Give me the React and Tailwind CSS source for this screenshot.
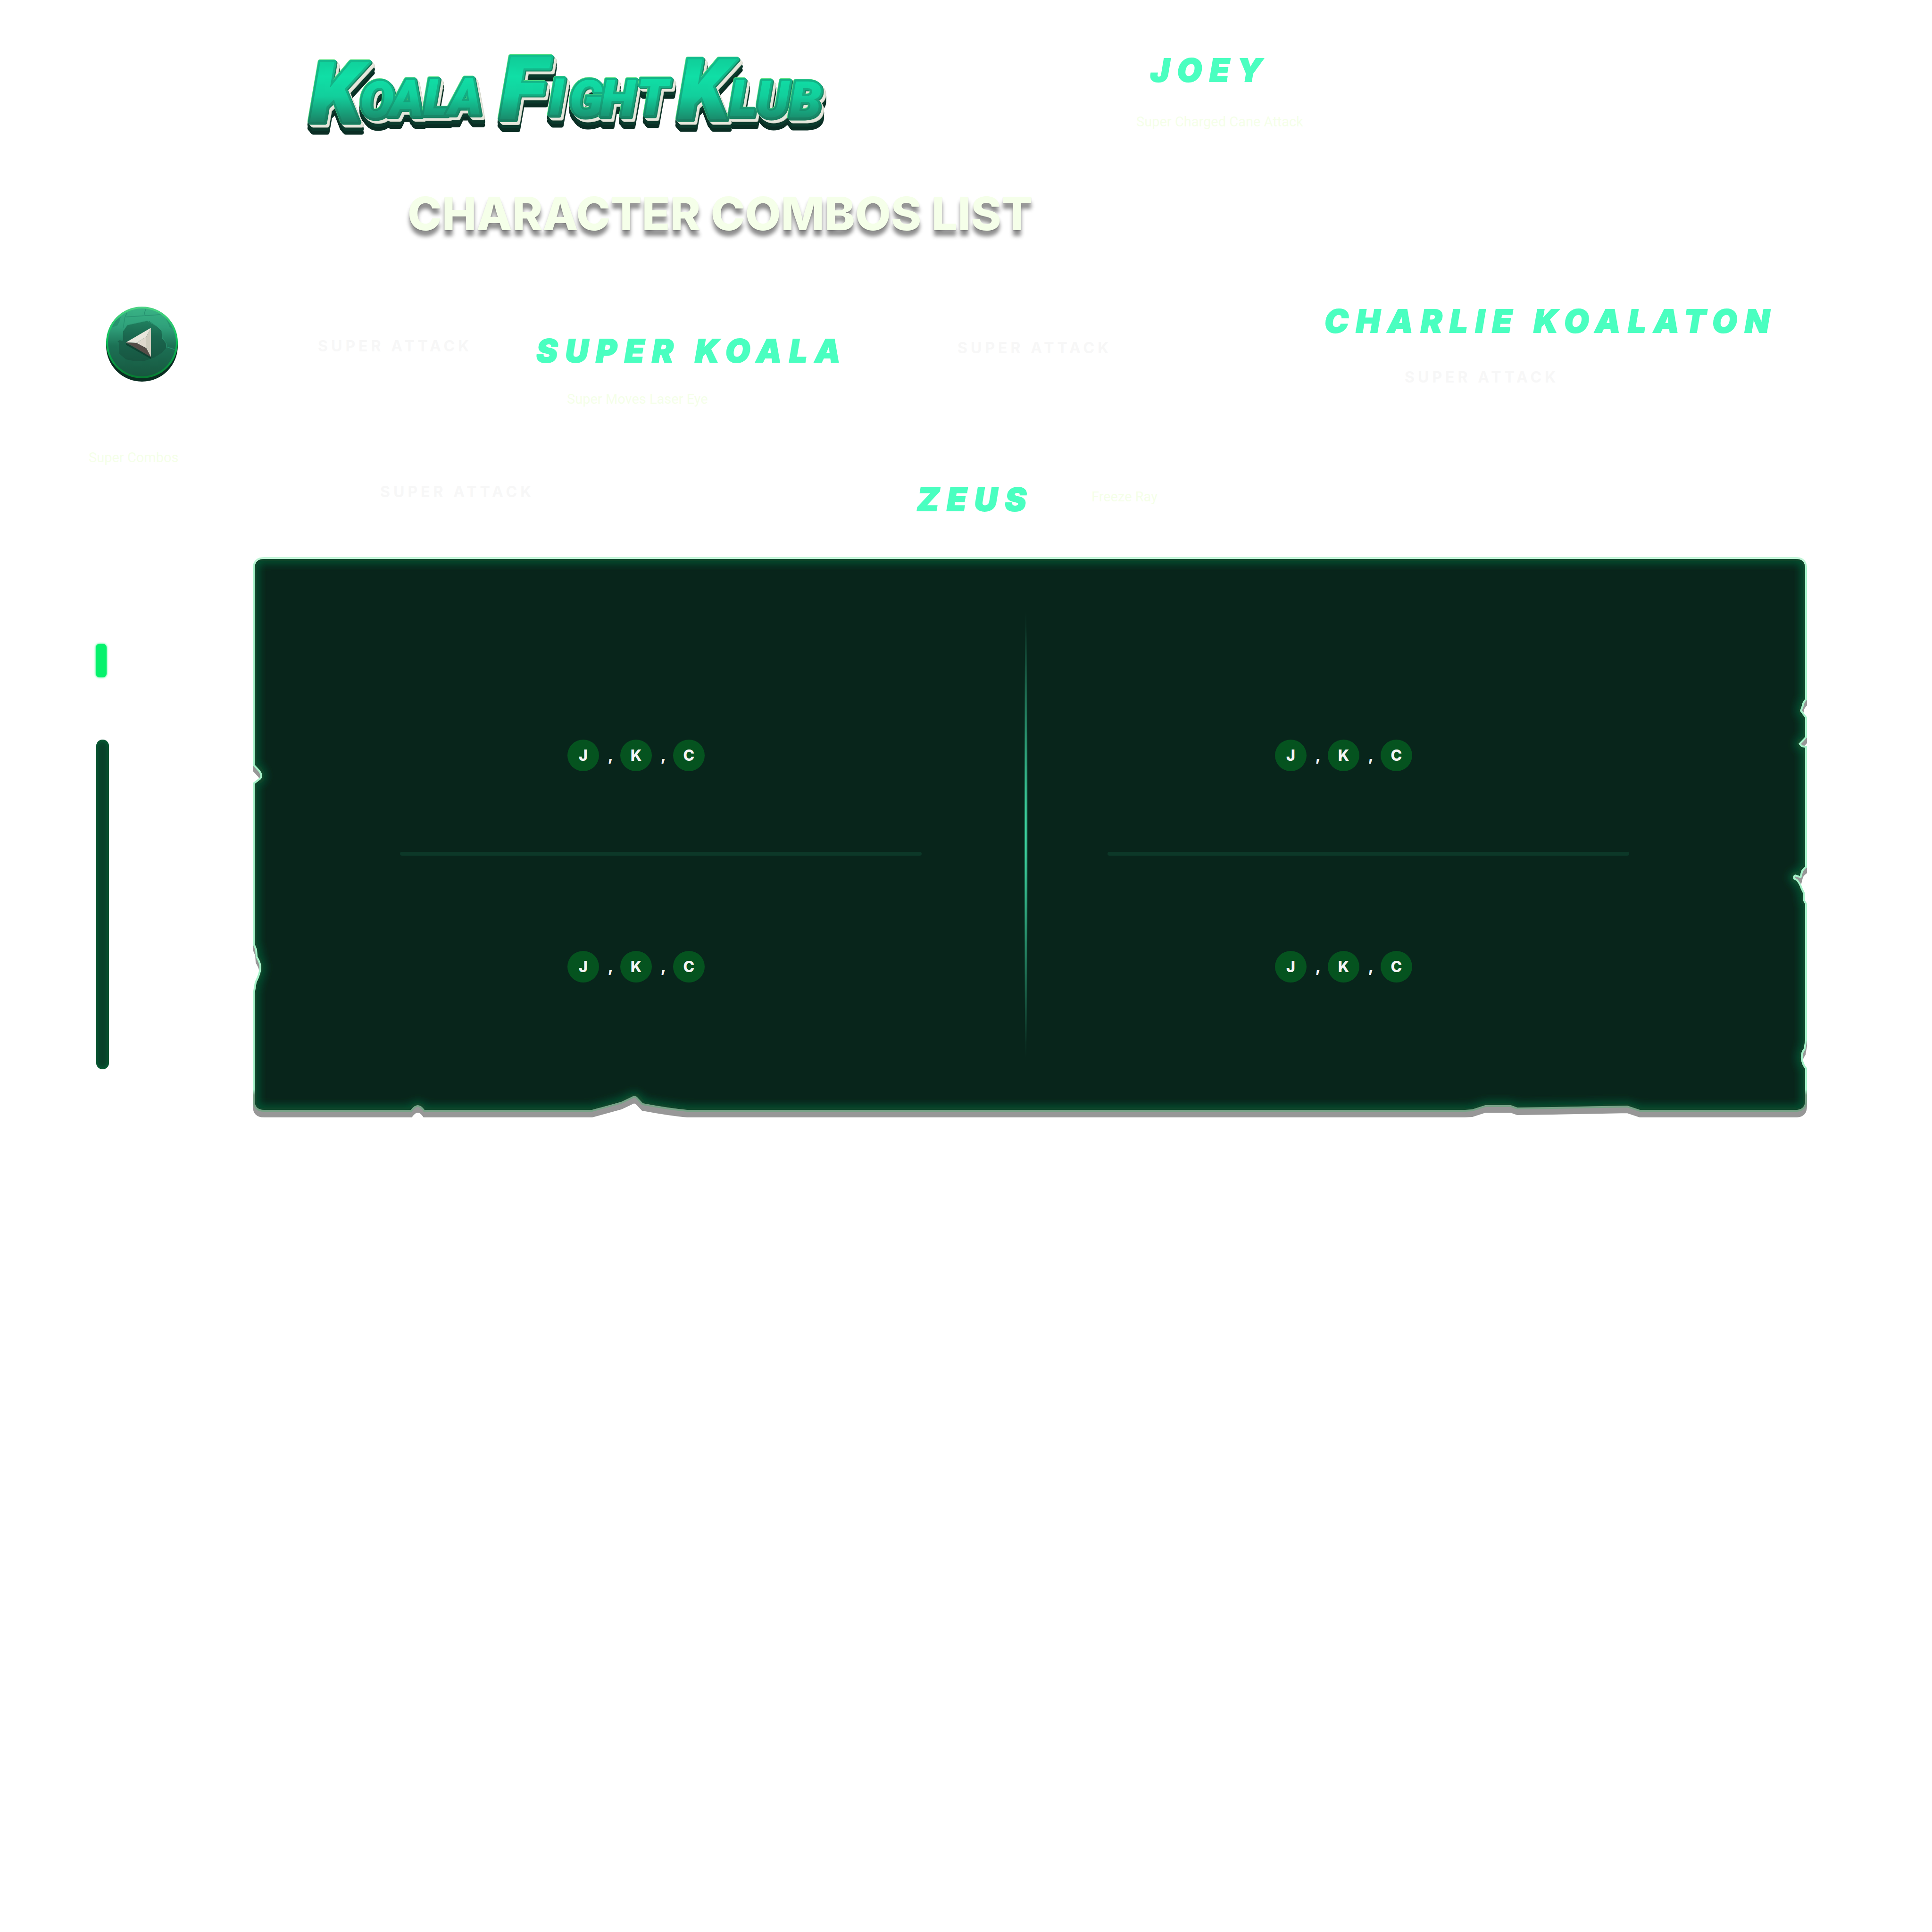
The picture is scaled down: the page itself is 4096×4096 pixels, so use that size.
const PANEL_EDGE =
  "M24 4 H3271 Q3291 4 3291 24 V301 Q3285 307 3284 315 L3280 326 L3291 341 V381 L3277 396 L3283 403 L3291 404 V656 Q3283 662 3282 668 L3280 676 L3270 673 Q3264 675 3266 683 L3272 686 Q3278 692 3282 704 L3286 712 L3287 729 L3291 736 V1024 L3288 1042 Q3281 1050 3282 1064 Q3284 1077 3291 1085 V1152 Q3291 1172 3271 1172 H2941 L2914 1163 L2755 1166 L2681 1167 L2667 1162 H2613 L2585 1171 L2570 1172 H921 Q880 1168 827 1158 L814 1144 L808 1142 Q800 1146 781 1155 L719 1172 H364 Q350 1152 335 1172 H24 Q4 1172 4 1152 V926 L8 902 Q18 882 18 870 Q18 860 10 847 L9 832 L4 820 V481 L17 471 Q24 464 15 452 L4 440 V24 Q4 4 24 4 Z";

function Logo() {
  return (
    <svg
      role="img"
      aria-label="Koala Fight Klub"
      viewBox="0 -60 1120 320"
      className="h-[320px] w-[1120px] overflow-visible font-[Roboto,sans-serif] font-black italic"
    >
      <defs>
        <linearGradient id="logoFill" gradientUnits="userSpaceOnUse" x1="0" y1="20" x2="0" y2="160">
          <stop offset="0" stopColor="#10cc98" />
          <stop offset="0.3" stopColor="#10dfa6" />
          <stop offset="0.6" stopColor="#12cf9c" />
          <stop offset="1" stopColor="#1b8164" />
        </linearGradient>
        <linearGradient id="logoEdge" gradientUnits="userSpaceOnUse" x1="0" y1="20" x2="0" y2="160">
          <stop offset="0" stopColor="#12bd8e" />
          <stop offset="0.6" stopColor="#14ac82" />
          <stop offset="1" stopColor="#197a5e" />
        </linearGradient>
      </defs>
      <g
        fill="url(#logoFill)"
        stroke="url(#logoEdge)"
        strokeWidth="9"
        strokeLinejoin="round"
        className="[paint-order:stroke] [filter:drop-shadow(-1px_-1px_0_#4fdf80)_drop-shadow(2px_2px_0_#17805f)_drop-shadow(4px_5px_0_#e6e7dc)_drop-shadow(1px_1px_0_#c9cbbe)_drop-shadow(0_7px_0_#0b3a2c)_drop-shadow(0_8px_0_#0a2e24)]"
      >
        <text x="17 123 187 258 311" y="158 149 145 144 142" fontSize="108">
          <tspan fontSize="178">K</tspan>OALA
        </text>
        <text x="420 524 567 633 710" y="152 143 146 146 144" fontSize="108">
          <tspan fontSize="186">F</tspan>IGHT
        </text>
        <text x="797 907 963 1034" y="152 146 148 149" fontSize="108">
          <tspan fontSize="178">K</tspan>LUB
        </text>
      </g>
    </svg>
  );
}

function BackButton() {
  return (
    <button type="button" aria-label="Back" className="col-start-2 mt-[10px] h-[160px] w-[152px]">
      <svg viewBox="0 0 152 160" className="h-[160px] w-[152px]" aria-hidden="true">
        <defs>
          <linearGradient id="ring" x1="0" y1="0" x2="0" y2="1">
            <stop offset="0" stopColor="#4ed486" />
            <stop offset="0.45" stopColor="#0cc25a" />
            <stop offset="1" stopColor="#067a31" />
          </linearGradient>
          <linearGradient id="face" x1="0" y1="0" x2="0" y2="1">
            <stop offset="0" stopColor="#38b184" />
            <stop offset="0.28" stopColor="#2fa07a" />
            <stop offset="0.55" stopColor="#1c7155" />
            <stop offset="1" stopColor="#17573f" />
          </linearGradient>
          <linearGradient id="dent" x1="0" y1="0" x2="0" y2="1">
            <stop offset="0" stopColor="#20805f" />
            <stop offset="0.4" stopColor="#1a664e" />
            <stop offset="1" stopColor="#175641" />
          </linearGradient>
        </defs>
        <circle cx="76" cy="83" r="76" fill="#0a2e22" />
        <circle cx="76" cy="76" r="76" fill="url(#ring)" />
        <circle cx="76" cy="76" r="72" fill="url(#face)" />
        <path d="M12 44 Q18 28 31 22 L28 32 L24 40 L16 43 Z M126 25 Q136 35 142 48 L134 43 L132 36 Z" fill="#279470" />
        <path d="M44 14 L40 22 L36 46 M42 22 L115 17 M84 6 L81 14 L83 19 M130 86 L145 91" fill="none" stroke="#279270" strokeWidth="1.5" />
        <path
          d="M45 39 L87 30 L92 31 L108 42 L118 52 L119 67 L127 77 L128 87 L118 98 L102 108 L82 115 L62 116 L42 112 L28 100 L27 85 L28 77 L24 74 L29 71 L34 73 L35 53 Z"
          fill="url(#dent)"
        />
        <path d="M35 72 V53 L45 39 L87 30 L108 42 L118 52 L119 67 L127 77 L128 87" fill="none" stroke="#2d9a75" />
        <path d="M42 77 L95 105 V111 L42 81 Z" fill="#0e4232" />
        <path d="M42 76 L95 45 L85 64 L64 77 Z" fill="#e9e6dc" />
        <path d="M95 45 V107 L85 88 V64 Z" fill="#cfccbe" />
        <path d="M64 77 L85 64 V88 Z" fill="#ded8cd" />
        <path d="M42 76 L64 77 L85 88 L95 107 Z" fill="#554c47" />
      </svg>
    </button>
  );
}

function Name({ children }) {
  return (
    <h2 className="text-[68px] leading-[80px] font-black tracking-[16px] whitespace-nowrap text-[#4affc0] italic [-webkit-text-stroke:2px_#4affc0]">
      {children}
    </h2>
  );
}

function SuperAttack() {
  return (
    <p className="text-[32px] leading-[40px] font-bold tracking-[7px] whitespace-nowrap text-[#f7f7f7]">SUPER ATTACK</p>
  );
}

function Move({ children }) {
  return (
    <p className="font-[Roboto,sans-serif] text-[29px] leading-[40px] whitespace-nowrap text-[#f5ffe9]">{children}</p>
  );
}

function Combo({ keys }) {
  return (
    <p className="flex pl-[355px] text-[32px] leading-[67px] font-extrabold text-[#f5f5f5]">
      {keys.map((key, i) => (
        <span key={key} className="flex">
          {i > 0 && <span className="w-[45px] pl-1 text-center">,</span>}
          <kbd className="size-[67px] rounded-full bg-[#05531f] text-center font-[Inter,sans-serif]">{key}</kbd>
        </span>
      ))}
    </p>
  );
}

function ComboColumn() {
  const keys = ["J", "K", "C"];
  return (
    <div className="min-w-0 pt-[387px] pb-[286px]">
      <Combo keys={keys} />
      <hr className="mt-[171px] mb-[202px] h-2 rounded-full border-0 bg-[#0c3828]" />
      <Combo keys={keys} />
    </div>
  );
}

function Panel() {
  return (
    <section aria-label="Combos" className="relative grid grid-cols-[312fr_1106fr_217fr_8fr_169fr_1106fr_377fr]">
      <svg
        aria-hidden="true"
        viewBox="0 0 3295 1188"
        preserveAspectRatio="none"
        className="absolute inset-0 -z-10 size-full"
      >
        <defs>
          <linearGradient id="rim" gradientUnits="userSpaceOnUse" x1="0" y1="0" x2="0" y2="1188">
            <stop offset="0.006" stopColor="#c2f6d8" />
            <stop offset="0.02" stopColor="#a6f2c9" />
            <stop offset="0.95" stopColor="#a6f2c9" />
            <stop offset="0.96" stopColor="#78a287" />
          </linearGradient>
          <clipPath id="panelClip">
            <path d={PANEL_EDGE} />
          </clipPath>
          <filter id="glow" x="-5%" y="-5%" width="110%" height="110%">
            <feGaussianBlur stdDeviation="9" />
          </filter>
        </defs>
        <path d={PANEL_EDGE} transform="translate(0 12)" fill="#979797" stroke="#979797" strokeWidth="8" />
        <path d={PANEL_EDGE} fill="#08251b" stroke="url(#rim)" strokeWidth="8" />
        <g clipPath="url(#panelClip)">
          <path d={PANEL_EDGE} fill="#08251b" />
          <path d={PANEL_EDGE} fill="none" stroke="#075f38" strokeWidth="14" filter="url(#glow)" />
        </g>
      </svg>
      <div className="col-start-2">
        <ComboColumn />
      </div>
      <div className="col-start-4 mt-[112px] mb-[123px] bg-[radial-gradient(closest-side,#4affc0,transparent)]" />
      <div className="col-start-6">
        <ComboColumn />
      </div>
    </section>
  );
}

export default function App() {
  return (
    <main className="relative isolate min-h-screen bg-white font-[Inter,sans-serif]">
      <header>
        <div className="grid grid-cols-[640fr_1769fr_1687fr] items-start">
          <div className="col-start-2 pt-[40px]">
            <Logo />
          </div>
          <div className="pt-[108px]">
            <div className="pl-[30px]">
              <Name>JOEY</Name>
            </div>
            <div className="mt-[50px]">
              <Move>Super Charged Cane Attack</Move>
            </div>
          </div>
        </div>
        <h1 className="mt-[43px] pl-[864px] text-[98px] leading-[100px] font-extrabold whitespace-nowrap text-[#f5ffe9] [text-shadow:0_2px_2px_rgb(0_0_0/0.15),0_12px_8px_rgb(0_0_0/0.45)]">
          CHARACTER COMBOS LIST
        </h1>
      </header>

      <div className="mt-[137px] grid grid-cols-[225fr_449fr_463fr_893fr_778fr_1288fr] items-start">
        <BackButton />
        <div className="mt-[74px]">
          <SuperAttack />
        </div>
        <div className="mt-[63px]">
          <Name>SUPER KOALA</Name>
          <div className="mt-[43px] pl-[65px]">
            <Move>Super Moves Laser Eye</Move>
          </div>
        </div>
        <div className="mt-[78px]">
          <SuperAttack />
        </div>
        <div>
          <Name>CHARLIE KOALATON</Name>
          <div className="mt-[60px] pl-[170px]">
            <SuperAttack />
          </div>
        </div>
      </div>

      <div className="mt-[84px] grid grid-cols-[188fr_618fr_1138fr_370fr_1782fr] items-start">
        <div className="col-start-2">
          <Move>Super Combos</Move>
        </div>
        <div className="mt-[73px]">
          <SuperAttack />
        </div>
        <div className="mt-[68px]">
          <Name>ZEUS</Name>
        </div>
        <div className="mt-[83px]">
          <Move>Freeze Ray</Move>
        </div>
      </div>

      <div className="mt-[83px] grid grid-cols-[203fr_333fr_3295fr_265fr] items-start">
        <div className="col-start-2 pt-[184px]">
          <div className="h-[71px] w-[23px] rounded-[8px] bg-[#05f26c] shadow-[0_0_4px_#05f26c]" />
          <div className="mt-[132px] ml-px h-[699px] w-[27px] rounded-full bg-[#094029] shadow-[inset_0_0_12px_#05703c]" />
        </div>
        <Panel />
      </div>
    </main>
  );
}
